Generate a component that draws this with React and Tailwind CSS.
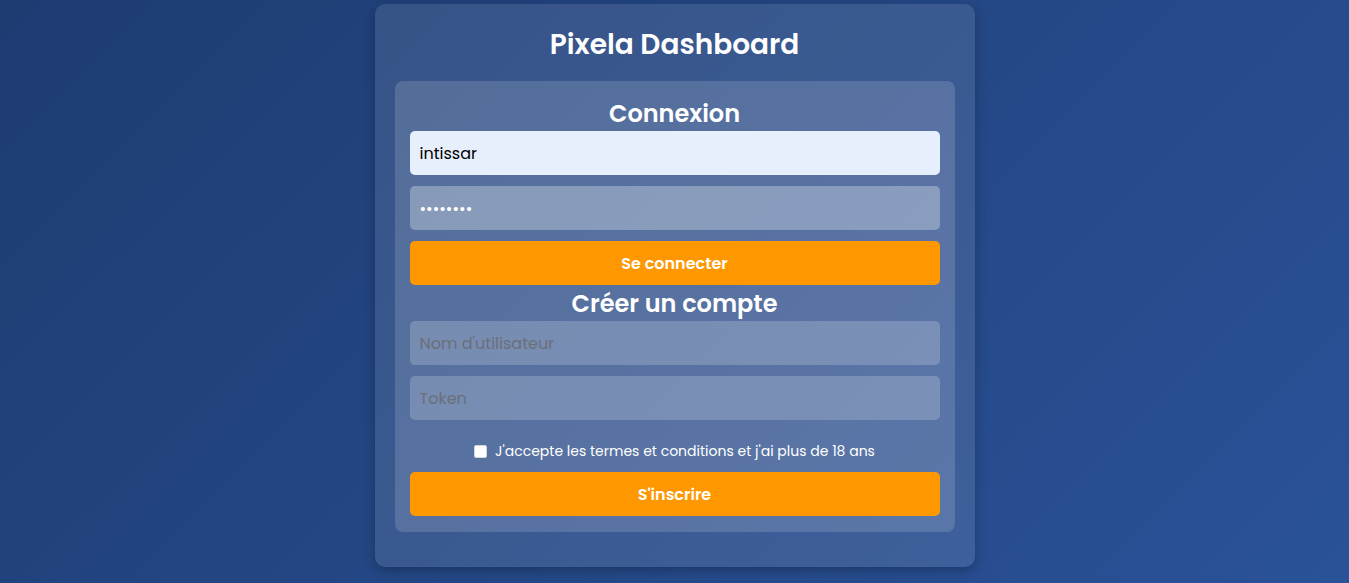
import React from "react";

export default function App() {
  return (
    <div
      className="min-h-screen w-full bg-linear-135 from-[#1e3c72] to-[#2a5298] flex justify-center"
      style={{ fontFamily: "Poppins, 'Open Sans', sans-serif" }}
    >
      <div className="w-[600px] mt-1 mb-4 self-start rounded-[10px] bg-white/10 px-5 pt-5 pb-[35px] shadow-[0_4px_12px_rgba(0,0,0,0.25)]">
        <h1 className="text-center text-[28px] leading-[42px] font-semibold text-white mb-[15px]">
          Pixela Dashboard
        </h1>
        <div className="rounded-lg bg-white/15 px-[15px] pt-[15px] pb-4 flex flex-col">
          <h2 className="text-center text-[24px] leading-[35px] font-semibold text-white">
            Connexion
          </h2>
          <input
            defaultValue="intissar"
            className="h-[44px] rounded-[5px] bg-[#e8effc] px-[10px] text-[16px] text-black outline-none"
          />
          <input
            type="password"
            defaultValue="intissar"
            className="mt-[11px] h-[44px] rounded-[5px] bg-white/30 px-[10px] text-[16px] text-white outline-none"
          />
          <button className="mt-[11px] h-[44px] pt-[2px] rounded-[5px] bg-[#ff9800] text-[16px] font-semibold text-white">
            Se connecter
          </button>
          <h2 className="pt-[2px] text-center text-[24px] leading-[34px] font-semibold text-white">
            Créer un compte
          </h2>
          <input
            placeholder="Nom d'utilisateur"
            className="h-[44px] rounded-[5px] bg-white/20 px-[10px] text-[16px] text-white placeholder:text-[#6b6f7a] outline-none"
          />
          <input
            placeholder="Token"
            className="mt-[11px] h-[44px] rounded-[5px] bg-white/20 px-[10px] text-[16px] text-white placeholder:text-[#6b6f7a] outline-none"
          />
          <label className="mt-[21px] mb-[10px] h-[21px] flex items-center justify-center gap-2 text-[14px] text-white">
            <span className="inline-block w-[13px] h-[13px] rounded-[2px] bg-white border border-gray-300" />
            <span>J'accepte les termes et conditions et j'ai plus de 18 ans</span>
          </label>
          <button className="h-[44px] pt-[2px] rounded-[5px] bg-[#ff9800] text-[16px] font-semibold text-white">
            S'inscrire
          </button>
        </div>
      </div>
    </div>
  );
}
